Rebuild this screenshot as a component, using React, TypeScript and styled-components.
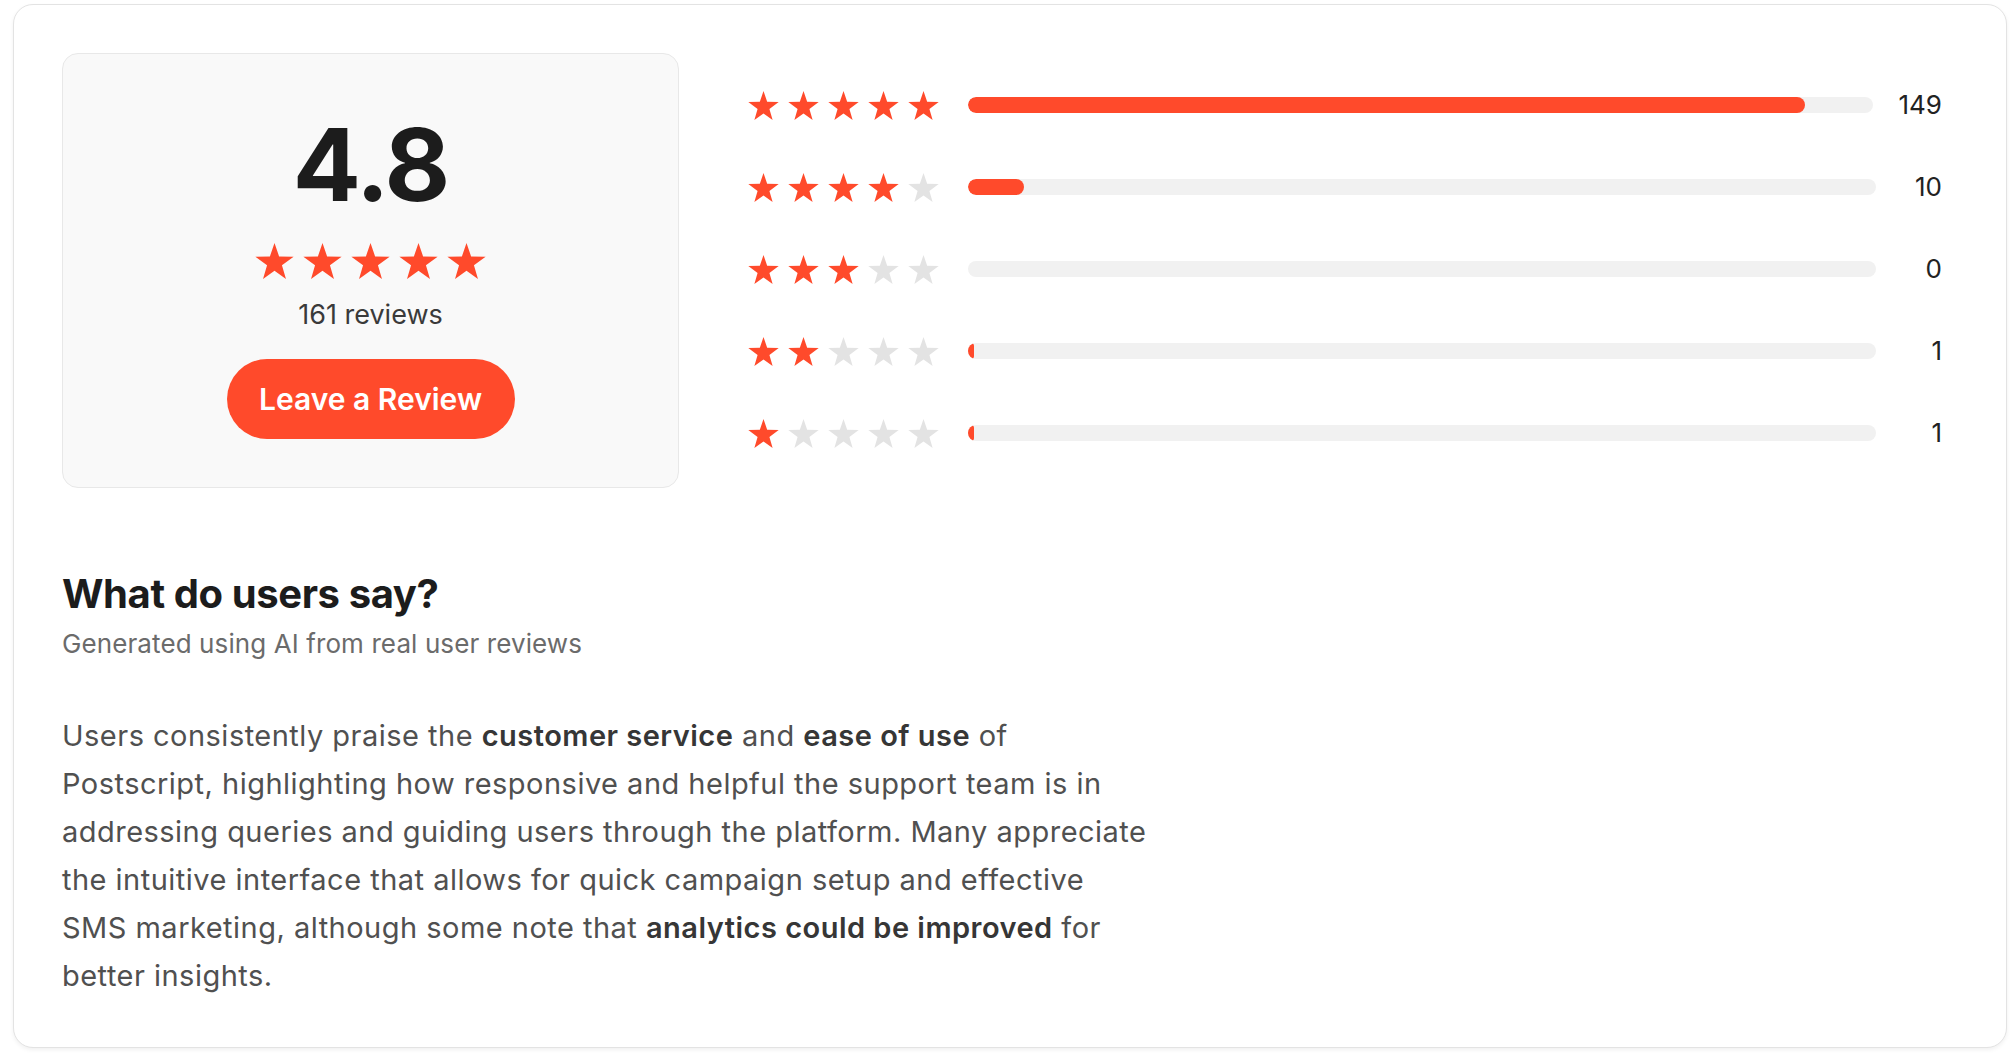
import React from "react";
import styled, { createGlobalStyle } from "styled-components";

const GlobalStyle = createGlobalStyle`
  html, body {
    margin: 0;
    padding: 0;
    background: #ffffff;
  }
  body {
    font-family: Inter, "Liberation Sans", Arial, sans-serif;
    -webkit-font-smoothing: antialiased;
  }
`;

const Page = styled.div`
  padding: 4px 9px 6px 13px;
`;

const Card = styled.section`
  background: #ffffff;
  border: 1px solid #e3e3e3;
  border-radius: 20px;
  box-shadow: 0 2px 4px rgba(0, 0, 0, 0.06);
  padding: 48px 48px 47px 48px;
`;

const Top = styled.div`
  display: flex;
  align-items: center;
  gap: 69px;
`;

const SummaryBox = styled.div`
  width: 617px;
  flex: none;
  box-sizing: border-box;
  background: #f9f9f9;
  border: 1px solid #e8e8e8;
  border-radius: 16px;
  padding: 60px 0 48px;
  display: flex;
  flex-direction: column;
  align-items: center;
`;

const Score = styled.div`
  font-size: 101px;
  line-height: 100px;
  font-weight: 700;
  color: #1c1c1c;
  letter-spacing: -2px;
`;

const StarRow = styled.div<{ $gap: number }>`
  display: flex;
  gap: ${(p) => p.$gap}px;
`;

const BigStars = styled(StarRow)`
  margin-top: 29px;
`;

const ReviewCount = styled.div`
  margin-top: 18px;
  font-size: 27px;
  line-height: 36px;
  color: #3a3a3a;
`;

const ReviewButton = styled.button`
  margin-top: 26px;
  height: 80px;
  width: 288px;
  border: none;
  border-radius: 40px;
  background: #ff4a2b;
  color: #ffffff;
  font-family: Inter, "Liberation Sans", Arial, sans-serif;
  font-size: 30px;
  font-weight: 600;
  letter-spacing: 0;
  cursor: pointer;
`;

const Distribution = styled.div`
  flex: 1;
  display: flex;
  flex-direction: column;
  gap: 50px;
  padding-right: 16px;
  margin-bottom: 3px;
`;

const DistRow = styled.div`
  display: flex;
  align-items: center;
  height: 32px;
`;

const Track = styled.div`
  flex: 1;
  height: 16px;
  margin: 0 26px 0 29px;
  border-radius: 8px;
  background: #f1f1f1;
  overflow: hidden;
`;

const Fill = styled.div`
  height: 100%;
  border-radius: 8px;
  background: #ff4a2b;
`;

const Count = styled.div`
  min-width: 40px;
  text-align: right;
  font-size: 26px;
  line-height: 32px;
  color: #222222;
`;

const Insights = styled.div`
  margin-top: 82px;
`;

const Heading = styled.h2`
  margin: 0;
  font-size: 40px;
  line-height: 48px;
  font-weight: 700;
  color: #1c1c1c;
  letter-spacing: -0.4px;
`;

const Subheading = styled.p`
  margin: 10px 0 0;
  font-size: 26px;
  line-height: 32px;
  letter-spacing: 0.1px;
  color: #6b6b6b;
`;

const Summary = styled.p`
  margin: 52px 0 0;
  font-size: 29px;
  line-height: 48px;
  letter-spacing: 0.48px;
  color: #505050;

  strong {
    font-weight: 600;
    color: #363636;
  }
`;

const Star = ({ filled, w, h }: { filled: boolean; w: number; h: number }) => (
  <svg width={w} height={h} viewBox="0 0 100 95.1" preserveAspectRatio="none">
    <polygon
      points="50,0 61.8,35.4 99,36.3 69.1,58.8 79.4,95.1 50,73.6 20.6,95.1 30.9,58.8 1,36.3 38.2,35.4"
      fill={filled ? "#ff4a2b" : "#e3e3e3"}
    />
  </svg>
);

const distribution = [
  { stars: 5, count: 149 },
  { stars: 4, count: 10 },
  { stars: 3, count: 0 },
  { stars: 2, count: 1 },
  { stars: 1, count: 1 },
];
const total = 161;

export default function App() {
  return (
    <>
      <GlobalStyle />
      <Page>
        <Card>
          <Top>
            <SummaryBox>
              <Score>4.8</Score>
              <BigStars $gap={9}>
                {[0, 1, 2, 3, 4].map((i) => (
                  <Star key={i} filled w={39} h={36} />
                ))}
              </BigStars>
              <ReviewCount>161 reviews</ReviewCount>
              <ReviewButton>Leave a Review</ReviewButton>
            </SummaryBox>
            <Distribution>
              {distribution.map((d) => (
                <DistRow key={d.stars}>
                  <StarRow $gap={9}>
                    {[0, 1, 2, 3, 4].map((i) => (
                      <Star key={i} filled={i < d.stars} w={31} h={29} />
                    ))}
                  </StarRow>
                  <Track>
                    {d.count > 0 && (
                      <Fill style={{ width: `${(d.count / total) * 100}%` }} />
                    )}
                  </Track>
                  <Count>{d.count}</Count>
                </DistRow>
              ))}
            </Distribution>
          </Top>
          <Insights>
            <Heading>What do users say?</Heading>
            <Subheading>Generated using AI from real user reviews</Subheading>
            <Summary>
              Users consistently praise the <strong>customer service</strong> and{" "}
              <strong>ease of use</strong> of
              <br />
              Postscript, highlighting how responsive and helpful the support team is in
              <br />
              addressing queries and guiding users through the platform. Many appreciate
              <br />
              the intuitive interface that allows for quick campaign setup and effective
              <br />
              SMS marketing, although some note that <strong>analytics could be improved</strong>{" "}
              for
              <br />
              better insights.
            </Summary>
          </Insights>
        </Card>
      </Page>
    </>
  );
}
